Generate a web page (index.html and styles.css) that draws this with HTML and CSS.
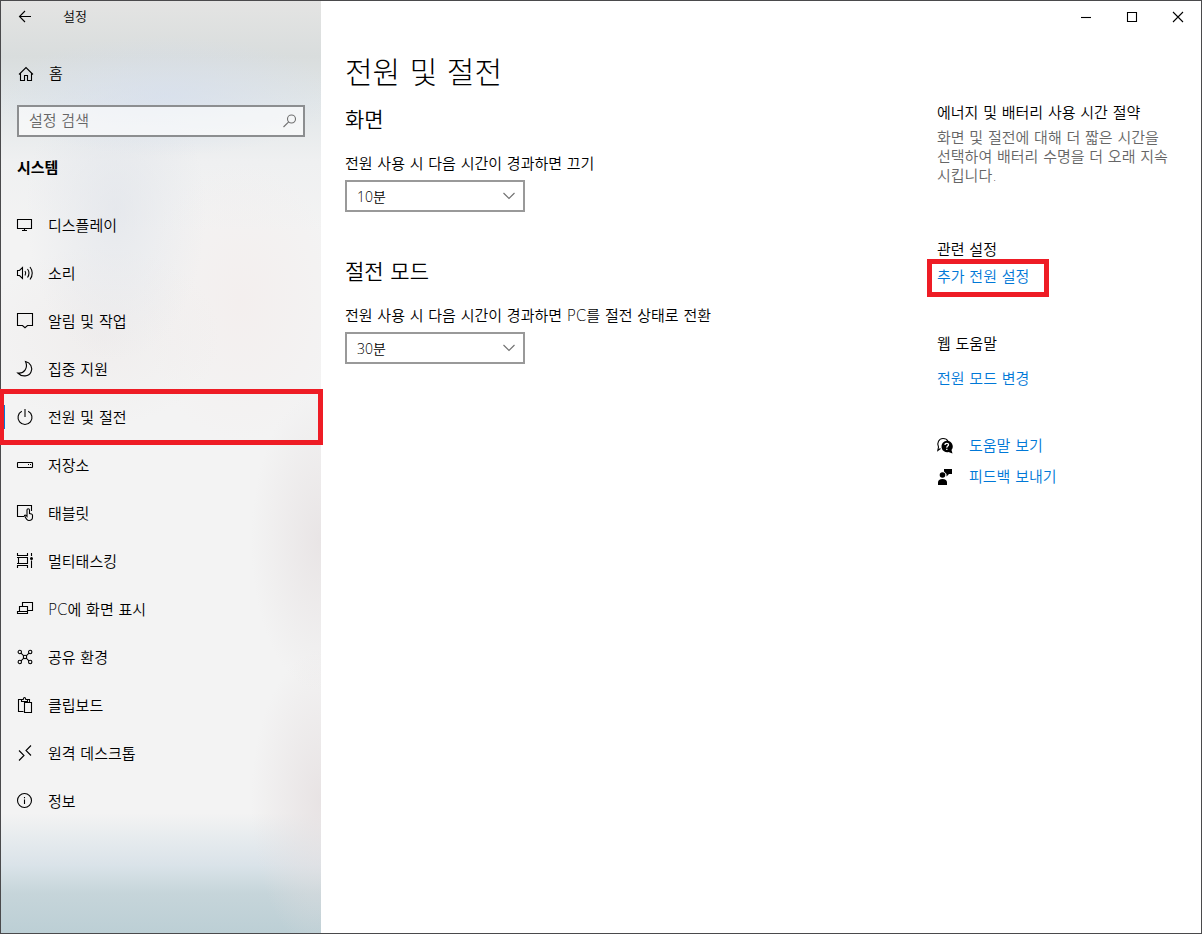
FILE: index.html
```html
<!DOCTYPE html>
<html lang="ko">

<head>
    <meta charset="UTF-8">
    <meta name="viewport" content="width=device-width, initial-scale=1.0">
    <title>설정</title>
    <link rel="stylesheet" href="styles.css">
</head>

<body>
    <div class="window">
        <div class="sidebar">
            <header class="titlebar">
                <button class="back-button" type="button" aria-label="뒤로">
                    <svg class="icon" viewBox="0 0 16 16"><path d="M14 7.500H2.500M8 2 2.500 7.500 8 13" /></svg>
                </button>
                <span class="app-title">설정</span>
            </header>

            <a class="home-link" href="#">
                <svg class="icon" viewBox="0 0 16 16"><path d="M1 8.500 8 1.500l7 7M2.500 7.500v7h4v-5h3v5h4v-7" /></svg>
                <span>홈</span>
            </a>

            <form class="search">
                <input type="text" id="search" placeholder="설정 검색" aria-label="설정 검색">
                <svg class="icon search-icon" viewBox="0 0 16 16"><circle cx="9.500" cy="6" r="4" /><path d="M6.700 8.900 1.500 14" /></svg>
            </form>

            <h2 class="category">시스템</h2>

            <nav class="nav">
                <a class="nav-item" href="#">
                    <svg class="icon" viewBox="0 0 16 16"><path d="M.5 2.500h14v9H.5zM7.500 11.500v2M5 13.500h5" /></svg>
                    <span>디스플레이</span>
                </a>
                <a class="nav-item" href="#">
                    <svg class="icon" viewBox="0 0 16 16"><path d="M.5 5.500h2l3-3v11l-3-3h-2zM8 6q1.500 2 0 4.500M10.500 4q3 4 0 8.500M13 2q4.500 6 0 12.500" /></svg>
                    <span>소리</span>
                </a>
                <a class="nav-item" href="#">
                    <svg class="icon" viewBox="0 0 16 16"><path d="M.5.500h15v12h-5l-2.500 2.200-2.500-2.200h-5z" /></svg>
                    <span>알림 및 작업</span>
                </a>
                <a class="nav-item" href="#">
                    <svg class="icon" viewBox="0 0 16 16"><path d="M8.500.500c5 1 7.500 6 5.500 10.500S5 16.500.8 12c6 .8 10.700-4.800 7.700-11.500z" /></svg>
                    <span>집중 지원</span>
                </a>
                <a class="nav-item active" href="#" aria-current="page">
                    <svg class="icon" viewBox="0 0 16 16"><path d="M8 0v8M4.800 2.300a7 7 0 1 0 6.400 0" /></svg>
                    <span>전원 및 절전</span>
                </a>
                <a class="nav-item" href="#">
                    <svg class="icon" viewBox="0 0 16 16"><rect x=".5" y="5.500" width="15" height="5" rx=".5" /><path d="M11 7.500h1M13 7.500h1" /></svg>
                    <span>저장소</span>
                </a>
                <a class="nav-item" href="#">
                    <svg class="icon" viewBox="0 0 16 16"><path d="M7 11.500H.5v-11h14V6" /><path d="M7.500 10.500q1-1 2.500.8V5q0-1.300 1.200-1.300T12.500 5v3.500l2 .5q1 .3 1 1.300v2q0 3.200-3.500 3.200c-2 0-2.800-1-4.500-5z" /></svg>
                    <span>태블릿</span>
                </a>
                <a class="nav-item" href="#">
                    <svg class="icon" viewBox="0 0 16 16"><path d="M.5 0v2.500h10V0M0 4.500h11M1.500 4.500v6h9v-6M0 10.500h11M.5 15v-2.500h10V15M14.500 0v3M14.500 7.500V15" /><circle class="solid" cx="14.500" cy="5.500" r="1.500" /></svg>
                    <span>멀티태스킹</span>
                </a>
                <a class="nav-item" href="#">
                    <svg class="icon" viewBox="0 0 16 16"><path d="M5.500 5.500v-4h10v8h-5M2.500 10.500v-5h8v5M.5 10.500h10v2H.5z" /></svg>
                    <span>PC에 화면 표시</span>
                </a>
                <a class="nav-item" href="#">
                    <svg class="icon" viewBox="0 0 16 16"><circle cx="2.800" cy="3" r="1.700" /><circle cx="13.200" cy="3" r="1.700" /><circle cx="2.800" cy="13" r="1.700" /><circle cx="13.200" cy="13" r="1.700" /><circle cx="8" cy="8" r="1.700" /><path d="m4 4.200 2.800 2.600M12 4.200 9.200 6.800M4 11.800l2.800-2.600M12 11.800 9.200 9.200" /></svg>
                    <span>공유 환경</span>
                </a>
                <a class="nav-item" href="#">
                    <svg class="icon" viewBox="0 0 16 16"><path d="M6.500 14.500h-5v-12h3M10.500 2.500h2v3M4.500 4.500v-2h1.700q.3-2 1.300-2t1.300 2h1.700v2zM7.500 5.500h7v10h-7z" /></svg>
                    <span>클립보드</span>
                </a>
                <a class="nav-item" href="#">
                    <svg class="icon" viewBox="0 0 16 16"><path d="m2 5.500 5 5-5 5M14 .5l-5 5 5 5" /></svg>
                    <span>원격 데스크톱</span>
                </a>
                <a class="nav-item" href="#">
                    <svg class="icon" viewBox="0 0 16 16"><circle cx="7.500" cy="7.500" r="7" /><path d="M7.500 6.500V11M7.500 4v1.200" /></svg>
                    <span>정보</span>
                </a>
            </nav>
        </div>

        <div class="page">
            <div class="window-controls">
                <button type="button" aria-label="최소화">
                    <svg class="control-icon" viewBox="0 0 11 11"><path d="M0 5.500h10" /></svg>
                </button>
                <button type="button" aria-label="최대화">
                    <svg class="control-icon" viewBox="0 0 11 11"><path d="M.5.500h9v9h-9z" /></svg>
                </button>
                <button type="button" aria-label="닫기">
                    <svg class="control-icon" viewBox="0 0 11 11"><path d="m0 0 10 10M10 0 0 10" /></svg>
                </button>
            </div>

            <div class="content">
                <main class="settings">
                    <h1>전원 및 절전</h1>

                    <section class="setting">
                        <h2>화면</h2>
                        <label for="screenOff">전원 사용 시 다음 시간이 경과하면 끄기</label>
                        <div class="select-box">
                            <select id="screenOff">
                                <option>5분</option>
                                <option selected>10분</option>
                                <option>30분</option>
                            </select>
                            <svg class="chevron" viewBox="0 0 12 12"><path d="m.5 3 5.500 5.500L11.500 3" /></svg>
                        </div>
                    </section>

                    <section class="setting">
                        <h2>절전 모드</h2>
                        <label for="sleepAfter">전원 사용 시 다음 시간이 경과하면 PC를 절전 상태로 전환</label>
                        <div class="select-box">
                            <select id="sleepAfter">
                                <option>10분</option>
                                <option selected>30분</option>
                                <option>1시간</option>
                            </select>
                            <svg class="chevron" viewBox="0 0 12 12"><path d="m.5 3 5.500 5.500L11.500 3" /></svg>
                        </div>
                    </section>
                </main>

                <aside class="related">
                    <section class="tip">
                        <h3>에너지 및 배터리 사용 시간 절약</h3>
                        <p>화면 및 절전에 대해 더 짧은 시간을 선택하여 배터리 수명을 더 오래 지속시킵니다.</p>
                    </section>

                    <section class="related-settings">
                        <h3>관련 설정</h3>
                        <a class="highlight" href="#">추가 전원 설정</a>
                    </section>

                    <section class="web-help">
                        <h3>웹 도움말</h3>
                        <a href="#">전원 모드 변경</a>
                    </section>

                    <div class="support">
                        <a href="#">
                            <svg class="icon" viewBox="0 0 16 16"><path d="M3.500 10.500.8 12.500l.7-3.500C-.5 5 2 .5 6 .5c2.500 0 4.200 1 5 2.700" /><path class="solid" d="M9.500 2.800a5.700 5.700 0 1 0 2 11.200l4 1.500-1-3.500A5.700 5.700 0 0 0 9.500 2.800z" /><path class="cutout" d="M8 7q0-1.700 1.800-1.700t1.700 1.500c0 1.300-1.700 1.300-1.700 2.900M9.800 10.800v1.300" /></svg>
                            <span>도움말 보기</span>
                        </a>
                        <a href="#">
                            <svg class="icon" viewBox="0 0 16 16"><circle class="solid" cx="5.500" cy="6" r="2.800" /><path class="solid" d="M1 16v-2.500q0-3.500 4.500-3.500t4.500 3.500V16zM7 0h8v5h-3l-2.500 2.500V5L7 2.500z" /></svg>
                            <span>피드백 보내기</span>
                        </a>
                    </div>
                </aside>
            </div>
        </div>
    </div>
</body>

</html>
```
FILE: styles.css
```css
:root {
    --accent-color: #0078d7;
    --highlight-color: #ee1c25;
    --text-color: #000000;
    --muted-color: #666666;
    --border-color: #999999;
}

* {
    box-sizing: border-box;
    margin: 0;
    padding: 0;
}

body {
    font-family: "DejaVu Sans", "Noto Sans CJK KR", sans-serif;
    font-size: 15px;
    font-weight: 350;
    line-height: 20px;
    color: var(--text-color);
    background-color: #ffffff;
}

a {
    color: var(--accent-color);
    text-decoration: none;
}

button {
    display: flex;
    align-items: center;
    justify-content: center;
    background: none;
    border: none;
}

h2,
h3 {
    font-weight: 350;
}

.window {
    display: flex;
    min-height: 100vh;
    border: 1px solid #4a4a4c;
}

/* Icons */
.icon {
    flex: none;
    width: 16px;
    height: 16px;
    overflow: visible;
}

.icon,
.control-icon,
.chevron {
    fill: none;
    stroke: #000000;
    stroke-width: 1.1;
}

.icon .solid {
    fill: #000000;
    stroke: none;
}

.icon .cutout {
    stroke: #ffffff;
    stroke-width: 1.3;
}

/* Sidebar */
.sidebar {
    flex: none;
    width: 320px;
    background:
        radial-gradient(ellipse 170px 60px at 165px 95px, rgba(214, 223, 238, 0.7), transparent),
        radial-gradient(ellipse 90px 150px at 115px 210px, rgba(222, 226, 233, 0.6), transparent),
        radial-gradient(ellipse 120px 90px at 100px 335px, rgba(237, 232, 231, 0.5), transparent),
        radial-gradient(ellipse 100px 140px at 240px 300px, rgba(243, 237, 236, 0.7), transparent),
        radial-gradient(ellipse 70px 150px at 320px 540px, rgba(230, 225, 226, 0.8), transparent),
        radial-gradient(ellipse 70px 150px at 320px 800px, rgba(229, 223, 224, 0.8), transparent),
        linear-gradient(to bottom, transparent calc(100% - 120px), #dae3e9 calc(100% - 68px), #c6d5da calc(100% - 40px), #bccfd5),
        linear-gradient(to bottom, #e4e4e3, #d9dddd 55px, #e1e6e8 100px, #eff0f1 160px, #f3f3f3 230px);
}

.titlebar {
    display: flex;
    align-items: center;
    height: 32px;
    padding-left: 16px;
    font-size: 13px;
}

.app-title {
    margin-left: 30px;
}

.home-link,
.nav-item {
    display: flex;
    align-items: center;
    gap: 15px;
    height: 48px;
    padding-left: 16px;
    color: var(--text-color);
}

.home-link {
    margin-top: 17px;
    padding-left: 17px;
}

.nav-item span {
    padding-top: 2px;
}

.search {
    position: relative;
    margin: 7px 16px 0;
}

.search input {
    display: block;
    width: 100%;
    height: 32px;
    padding: 0 36px 0 10px;
    font: inherit;
    background-color: rgba(255, 255, 255, 0.6);
    border: 2px solid #8c8e90;
}

.search input::placeholder {
    color: var(--muted-color);
    opacity: 1;
}

.search-icon {
    position: absolute;
    top: 8px;
    right: 7px;
    stroke: #707070;
}

.category {
    margin: 19px 16px 21px;
    font-size: 15px;
    font-weight: 700;
    line-height: 24px;
}

.nav-item {
    position: relative;
}

.nav-item.active::before {
    content: "";
    position: absolute;
    top: 12px;
    left: 0;
    width: 4px;
    height: 24px;
    background-color: var(--accent-color);
}

.nav-item.active::after {
    content: "";
    position: absolute;
    inset: -4px -2px -4px -1px;
    border: 5px solid var(--highlight-color);
    border-left-width: 4px;
}

/* Page */
.page {
    flex: 1;
}

.window-controls {
    display: flex;
    justify-content: flex-end;
    height: 32px;
}

.window-controls button {
    width: 46px;
}

.control-icon {
    width: 11px;
    height: 11px;
    overflow: visible;
}

.content {
    display: flex;
    justify-content: space-between;
    gap: 24px;
    padding: 20px 28px 24px 24px;
}

h1 {
    font-size: 30px;
    font-weight: 300;
    line-height: 40px;
}

.setting h2 {
    margin-bottom: 20px;
    font-size: 21px;
    line-height: 28px;
}

.setting {
    margin-top: 13px;
}

.setting + .setting {
    margin-top: 46px;
}

.setting label {
    display: block;
}

.select-box {
    position: relative;
    width: 180px;
    margin-top: 6px;
}

.select-box select {
    appearance: none;
    display: block;
    width: 100%;
    height: 32px;
    padding: 0 32px 0 10px;
    font-family: "Open Sans", "Noto Sans CJK KR", sans-serif;
    font-size: 14px;
    font-weight: 350;
    color: var(--text-color);
    background-color: #ffffff;
    border: 2px solid var(--border-color);
    border-radius: 0;
}

.chevron {
    position: absolute;
    top: 10px;
    right: 10px;
    width: 12px;
    height: 12px;
    stroke: #707070;
    pointer-events: none;
}

/* Right column */
.related {
    flex: none;
    width: 236px;
    padding-top: 50px;
}

.related h3 {
    font-size: 15px;
}

.tip p {
    margin-top: 6px;
    line-height: 19px;
    color: var(--muted-color);
}

.related-settings {
    margin-top: 54px;
}

.related-settings a,
.web-help a {
    display: block;
    width: fit-content;
}

.related-settings a {
    margin-top: 7px;
}

.highlight {
    position: relative;
}

.highlight::after {
    content: "";
    position: absolute;
    inset: -8px -20px -10px -10px;
    border: 5px solid var(--highlight-color);
}

.web-help {
    margin-top: 47px;
}

.web-help a {
    margin-top: 15px;
}

.support {
    display: flex;
    flex-direction: column;
    gap: 11px;
    margin-top: 47px;
}

.support a {
    display: flex;
    align-items: center;
    gap: 16px;
}
```
